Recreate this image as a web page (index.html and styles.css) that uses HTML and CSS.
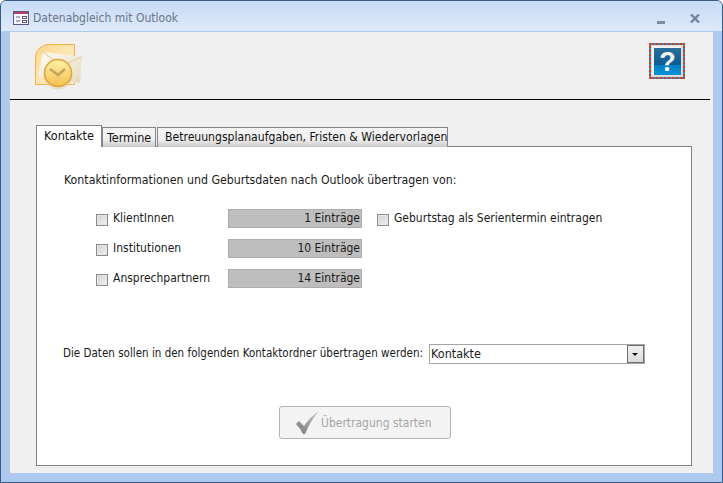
FILE: index.html
```html
<!DOCTYPE html>
<html lang="de">
<head>
<meta charset="utf-8">
<title>Datenabgleich mit Outlook</title>
<link rel="stylesheet" href="styles.css">
</head>
<body>
<div class="window">
  <div class="titlebar">
    <svg class="appicon" width="16" height="16" viewBox="0 0 16 16">
      <rect x="0.5" y="1.5" width="15" height="13" fill="#f4f4fa" stroke="#5d5a80"/>
      <rect x="1" y="2" width="14" height="2" fill="#b0406a"/>
      <path d="M3 7h4M3 11h4" stroke="#6a6a90"/>
      <rect x="9.5" y="6.5" width="4" height="2" fill="#fff" stroke="#5d5a80"/>
      <rect x="9.5" y="10.5" width="4" height="2" fill="#fff" stroke="#5d5a80"/>
    </svg>
    <span class="title">Datenabgleich mit Outlook</span>
    <span class="winbtn">
      <svg class="minimize" width="8" height="3" viewBox="0 0 8 3"><rect width="8" height="3" fill="#7f8ba3"/></svg>
      <svg width="10" height="9" viewBox="0 0 10 9"><path d="M1 .5 9 8.500M9 .5 1 8.500" stroke="#77839d" stroke-width="2.400"/></svg>
    </span>
  </div>
  <div class="client">
    <div class="header">
      <svg class="outlook" width="48" height="46" viewBox="0 0 48 46">
        <defs>
          <linearGradient id="o1" x1="0" y1="0" x2="1" y2="1"><stop offset="0" stop-color="#fbd78e"/><stop offset="1" stop-color="#fff3d6"/></linearGradient>
          <linearGradient id="o2" x1="0" y1="0" x2="0" y2="1"><stop offset="0" stop-color="#fff2a8"/><stop offset="1" stop-color="#f3c04d"/></linearGradient>
          <linearGradient id="o3" x1="0" y1="0" x2="1" y2="1"><stop offset="0" stop-color="#fffdf5"/><stop offset="1" stop-color="#e6d9bd"/></linearGradient>
        </defs>
        <path d="M.5 40.5V12Q2 3 12 .5H39.500V40.500Z" fill="url(#o1)" stroke="#f2b450"/>
        <path d="M8 8 47 13 45 39 3 33Z" fill="url(#o3)"/>
        <path d="M8 8 26 22 47 13" fill="none" stroke="#e8d6ae" stroke-width="1.500"/>
        <circle cx="23" cy="31" r="14.500" fill="#e0cfa5" opacity=".5"/>
        <circle cx="23" cy="29" r="13.500" fill="url(#o2)" stroke="#dda53a" stroke-width="1.500"/>
        <path d="M15 25 23 31 30 25" fill="none" stroke="#c9a45e" stroke-width="2.600"/>
      </svg>
      <div class="helpbtn">
        <svg width="32" height="32" viewBox="0 0 32 32">
          <defs><linearGradient id="h1" x1="0" y1="0" x2="0" y2="1"><stop offset="0" stop-color="#2a6d9a"/><stop offset=".62" stop-color="#0b5c93"/><stop offset=".63" stop-color="#0080c4"/><stop offset="1" stop-color="#0a90d4"/></linearGradient></defs>
          <rect width="32" height="32" fill="#dcdcdc"/>
          <rect x="1" y="1" width="29" height="29" fill="#f4f4f4"/>
          <rect x="3" y="3" width="27" height="27" fill="url(#h1)"/>
          <text class="helpq" x="16.500" y="26">?</text>
        </svg>
      </div>
    </div>
    <div class="tabs">
      <div class="tab active">Kontakte</div>
      <div class="tab middle">Termine</div>
      <div class="tab wide">Betreuungsplanaufgaben, Fristen &amp; Wiedervorlagen</div>
    </div>
    <div class="panel">
      <p class="intro">Kontaktinformationen und Geburtsdaten nach Outlook übertragen von:</p>
      <div class="rows">
        <label class="check"><span class="box"></span><span class="text">KlientInnen</span></label>
        <div class="count">1 Einträge</div>
        <label class="check extra"><span class="box"></span><span class="text">Geburtstag als Serientermin eintragen</span></label>
        <label class="check"><span class="box"></span><span class="text">Institutionen</span></label>
        <div class="count">10 Einträge</div>
        <span></span>
        <label class="check"><span class="box"></span><span class="text">Ansprechpartnern</span></label>
        <div class="count">14 Einträge</div>
        <span></span>
      </div>
      <div class="folder">
        <span class="folder-label">Die Daten sollen in den folgenden Kontaktordner übertragen werden:</span>
        <div class="combo"><span class="combo-value">Kontakte</span><span class="arrow"></span></div>
      </div>
      <div class="action">
        <div class="start">
          <svg width="24" height="24" viewBox="0 0 24 24">
            <defs><linearGradient id="c1" x1="0" y1="1" x2="1" y2="0"><stop offset="0" stop-color="#777"/><stop offset="1" stop-color="#ccc"/></linearGradient></defs>
            <path d="M0 13 3 10 8 15Q14 6 23 0 15 9 9 23H7Q4 17 0 13Z" fill="url(#c1)"/>
          </svg>
          Übertragung starten
        </div>
      </div>
    </div>
  </div>
</div>
</body>
</html>
```
FILE: styles.css
```css
* { box-sizing: border-box; }
html, body { margin: 0; padding: 0; }
body {
  width: 723px;
  height: 483px;
  overflow: hidden;
  font-family: "DejaVu Sans Condensed", "DejaVu Sans", sans-serif;
  font-stretch: condensed;
  font-size: 12px;
  color: #1a1a1a;
}
.window {
  width: 723px;
  height: 483px;
  display: flex;
  flex-direction: column;
  background: #aecaee;
  border: 1px solid #3a5a88;
  border-radius: 6px 6px 0 0;
  padding: 0 9px 9px;
}
.titlebar {
  height: 31px;
  margin: 0 -9px;
  padding: 4px 22px 0 12px;
  flex: none;
  display: flex;
  align-items: center;
  background: linear-gradient(#c6daf5, #dfeafa);
  border-bottom: 1px solid #aecaee;
  border-radius: 5px 5px 0 0;
}
.appicon { flex: none; margin-right: 4px; }
.title { color: #6c7488; flex: 1; }
.winbtn { display: flex; align-items: center; gap: 25px; }
.minimize { margin-top: 8px; }
.client {
  flex: 1;
  display: flex;
  flex-direction: column;
  background: #f0f0f0;
  padding: 0 21px 7px 26px;
}
.header {
  height: 68px;
  flex: none;
  margin: 0 -18px 0 -26px;
  padding: 11px 25px 0 25px;
  border-bottom: 1px solid #000;
  display: flex;
  justify-content: space-between;
  align-items: flex-start;
}
.outlook { flex: none; margin-top: 1px; }
.helpbtn {
  width: 36px;
  height: 36px;
  border: 2px dotted #d33a20;
  background: #3d8ab8;
}
.helpbtn svg { display: block; }
.helpq { font: bold 27px "Liberation Sans", sans-serif; fill: #f4f4f4; text-anchor: middle; }
.tabs {
  display: flex;
  align-items: flex-end;
  height: 22px;
  margin-top: 25px;
  flex: none;
  position: relative;
  z-index: 1;
  margin-bottom: -1px;
}
.tab {
  height: 20px;
  line-height: 19px;
  font-size: 12.500px;
  color: #111;
  border: 1px solid #85858d;
  border-bottom: none;
  background: linear-gradient(#f4f4f4, #f0f0f0 60%, #c8c8c8);
  white-space: nowrap;
}
.tab.active {
  width: 66px;
  height: 22px;
  padding-left: 7px;
  background: #fff;
  line-height: 20px;
}
.tab.middle { width: 54px; padding-left: 4px; }
.tab.wide {
  width: 291px;
  margin-left: 1px;
  padding-left: 7px;
  font-size: 12.100px;
}
.panel {
  flex: 1;
  background: #fff;
  border: 1px solid #808084;
  padding: 26px 27px 0;
}
.intro { margin: 0; line-height: 15px; font-size: 12.250px; }
.rows {
  display: grid;
  grid-template-columns: 132px 134px 1fr;
  grid-auto-rows: 19px;
  row-gap: 11px;
  margin: 21px 0 0 32px;
  align-items: center;
}
.check {
  display: flex;
  align-items: center;
  gap: 5px;
  white-space: nowrap;
}
.check .text { margin-bottom: 2px; }
.extra { margin-left: 15px; }
.box {
  width: 12px;
  height: 12px;
  flex: none;
  margin-top: 2px;
  border: 1px solid #8a8a8a;
  background: linear-gradient(135deg, #d0d0d0, #f2f2f2);
  box-shadow: inset 0 0 0 1px #e8e8e8;
}
.count {
  height: 19px;
  line-height: 17px;
  text-align: right;
  padding-right: 1px;
  background: #bebebe;
  border: 1px solid #adadad;
}
.folder {
  display: flex;
  align-items: center;
  margin: 56px 0 0 -1px;
  height: 20px;
}
.folder-label {
  width: 366px;
  flex: none;
  margin-bottom: 3px;
  font-size: 11.500px;
  letter-spacing: 0.010px;
  white-space: nowrap;
}
.combo {
  width: 216px;
  height: 20px;
  display: flex;
  align-items: center;
  justify-content: space-between;
  border: 1px solid #a5a5a5;
  padding: 0 0 0 1px;
  font-size: 12.500px;
}
.combo-value { margin-bottom: 2px; }
.arrow {
  width: 17px;
  height: 18px;
  border: 1px solid #6e6e6e;
  background: linear-gradient(#f0f0f0, #dcdcdc);
  position: relative;
  flex: none;
}
.arrow::after {
  content: "";
  position: absolute;
  left: 4px;
  top: 7px;
  border: 3.500px solid transparent;
  border-top: 3.500px solid #111;
  border-bottom: none;
}
.action { margin: 42px 0 0 215px; }
.start {
  width: 172px;
  height: 33px;
  display: flex;
  align-items: center;
  padding-left: 16px;
  gap: 1px;
  border: 1px solid #b4b4b4;
  border-radius: 3px;
  background: #f4f4f4;
  color: #a6a6a6;
  white-space: nowrap;
}
```
